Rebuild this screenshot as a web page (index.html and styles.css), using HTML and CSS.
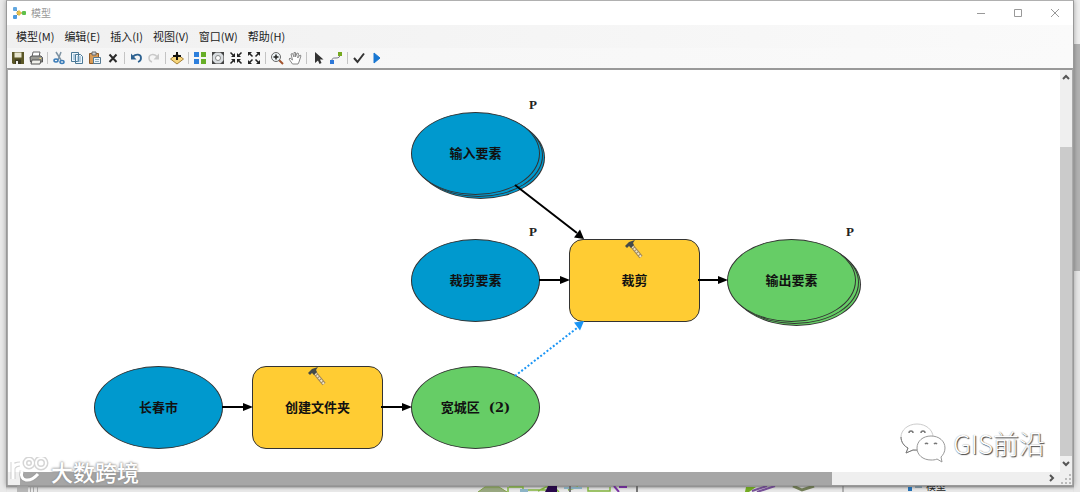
FILE: index.html
```html
<!DOCTYPE html>
<html lang="zh-CN">
<head>
<meta charset="utf-8">
<title>模型</title>
<link rel="stylesheet" href="styles.css">
</head>
<body>
<div class="desk">
<main class="window">
  <header class="titlebar">
    <svg class="app-icon" width="14" height="14" viewBox="0 0 14 14"><path d="M3 3l4 4h4M3 11l4-4" fill="none" stroke="#667" stroke-width="1"/><rect x="1" y="1" width="4" height="4" rx="1" fill="#63a8e0"/><rect x="1" y="9" width="4" height="4" rx="1" fill="#4c9be0"/><path d="M7 4l3 3-3 3-3-3z" fill="#e5c04a"/><rect x="10" y="5" width="4" height="4" rx="1" fill="#5fc04a"/></svg>
    <h1 class="title">模型</h1>
    <div class="controls">
      <button class="control" aria-label="最小化"><svg width="10" height="10"><path d="M1 5.500h8"/></svg></button>
      <button class="control" aria-label="最大化"><svg width="10" height="10"><path d="M1.500 1.500h7v7h-7z"/></svg></button>
      <button class="control" aria-label="关闭"><svg width="10" height="10"><path d="M1 1l8 8M9 1l-8 8"/></svg></button>
    </div>
  </header>
  <nav class="menu">
    <button>模型(M)</button><button>编辑(E)</button><button>插入(I)</button><button>视图(V)</button><button>窗口(W)</button><button>帮助(H)</button>
  </nav>
  <div class="toolbar" role="toolbar">
    <button class="tool" aria-label="保存"><svg width="14" height="14" viewBox="0 0 14 14"><path d="M1 1h12v12H2l-1-1z" fill="#5b5727"/><path d="M3.500 1.500h7v5h-7z" fill="#e8e6cf"/><path d="M4 8.500h6V13H4z" fill="#3c3a20"/><path d="M5 10h2v3H5z" fill="#eee"/></svg></button>
    <button class="tool" aria-label="打印"><svg width="14" height="14" viewBox="0 0 14 14"><path d="M4 1h7l-1 5H3z" fill="#fff" stroke="#666"/><path d="M1 6l2-1h9l1.500 1.500V11h-12z" fill="#9a9a94" stroke="#555"/><path d="M3 9h9l-1 4H2z" fill="#f1f1ec" stroke="#555"/><path d="M10.500 7.500h1.500" stroke="#fd6"/></svg></button>
    <span class="sep"></span>
    <button class="tool" aria-label="剪切"><svg width="14" height="14" viewBox="0 0 14 14"><path d="M4 1l5 8M9 1L6 9" stroke="#7e93a3" stroke-width="1.500"/><g fill="none" stroke="#3a7cb8" stroke-width="1.500"><ellipse cx="4" cy="9.500" rx="2" ry="1.500"/><ellipse cx="10" cy="11" rx="2" ry="1.500"/></g></svg></button>
    <button class="tool" aria-label="复制"><svg width="14" height="14" viewBox="0 0 14 14"><g fill="#eef6fc" stroke="#4a7896"><path d="M1.500 1.500h7v9h-7zM5.500 3.500h5l2 2v7h-7z"/></g><path d="M7 6h4M7 8h4M7 10h4M3 4h2M3 6h2M3 8h2" stroke="#79a6c7"/></svg></button>
    <button class="tool" aria-label="粘贴"><svg width="14" height="14" viewBox="0 0 14 14"><path d="M1.500 2.500h9v10h-9z" fill="#d99b55" stroke="#8d5a28"/><path d="M4 1h4v3H4z" fill="#d3d3d3" stroke="#666"/><path d="M5.500 6.500h7v6h-7z" fill="#edf5fa" stroke="#557890"/><path d="M7 8.500h4M7 10.500h4" stroke="#88a9bd"/></svg></button>
    <button class="tool" aria-label="删除"><svg width="14" height="14" viewBox="0 0 14 14"><path d="M3.500 3.500l7 7.500M10.500 3.500l-7 7.500" stroke="#2b2b2b" stroke-width="2"/></svg></button>
    <span class="sep"></span>
    <button class="tool" aria-label="撤销"><svg width="14" height="14" viewBox="0 0 14 14"><path d="M4 5.500C7 2.500 12 3 12 7c0 2-1.500 3.500-3 4" fill="none" stroke="#2c6190" stroke-width="1.800"/><path d="M2 2.500v6h5.500z" fill="#2c6190"/></svg></button>
    <button class="tool" aria-label="重做"><svg width="14" height="14" viewBox="0 0 14 14"><path d="M10 5.500C7 2.500 2 3 2 7c0 2 1.500 3.500 3 4" fill="none" stroke="#c9c9c9" stroke-width="1.500"/><path d="M12 2.500v6H6.500z" fill="#c9c9c9"/></svg></button>
    <span class="sep"></span>
    <button class="tool" aria-label="添加数据"><svg width="14" height="14" viewBox="0 0 14 14"><path d="M7 3l6.500 5L7 13 .5 8z" fill="#f6d57b" stroke="#a58135"/><path d="M7 1v8M3 5h8" stroke="#111" stroke-width="2"/></svg></button>
    <span class="sep"></span>
    <button class="tool" aria-label="自动布局"><svg width="14" height="14" viewBox="0 0 14 14"><path d="M1 1h5v5H1zM1 8h5v5H1z" fill="#2d7fdc"/><path d="M8 1h5v5H8zM8 8h5v5H8z" fill="#67ae28"/></svg></button>
    <button class="tool" aria-label="全图"><svg width="14" height="14" viewBox="0 0 14 14"><path d="M1.500 1.500h11v11h-11z" fill="#d9dde0" stroke="#888"/><circle cx="7" cy="7" r="2.500" fill="#fff" stroke="#888"/><path d="M1 1h4L1 5zM13 1v4L9 1zM1 13V9l4 4zM13 13H9l4-4z" fill="#444"/></svg></button>
    <button class="tool" aria-label="固定缩小"><svg width="14" height="14" viewBox="0 0 14 14"><path d="M1.500 1.500l3 3M12.500 1.500l-3 3M1.500 12.500l3-3M12.500 12.500l-3-3" stroke="#222" stroke-width="1.500"/><path d="M6 6H2l4-4zM8 6h4L8 2zM6 8H2l4 4zM8 8h4l-4 4z" fill="#222"/></svg></button>
    <button class="tool" aria-label="固定放大"><svg width="14" height="14" viewBox="0 0 14 14"><path d="M2 2l3.500 3.500M12 2L8.500 5.500M2 12l3.500-3.500M12 12L8.500 8.500" stroke="#222" stroke-width="1.500"/><path d="M1 1h4L1 5zM13 1v4L9 1zM1 13V9l4 4zM13 13H9l4-4z" fill="#222"/></svg></button>
    <span class="sep"></span>
    <button class="tool" aria-label="缩放"><svg width="14" height="14" viewBox="0 0 14 14"><path d="M9 9l4 4" stroke="#a2522c" stroke-width="2"/><circle cx="6" cy="6" r="4.500" fill="#eef4f6" stroke="#666"/><path d="M6 3.500v5M3.500 6h5" stroke="#222" stroke-width="1.500"/></svg></button>
    <button class="tool" aria-label="平移"><svg width="14" height="14" viewBox="0 0 14 14"><path d="M4.500 13L1 8l1-1 2.500 2L3 3l1.500-.5L6 6V1.500h1.500V6L9 2l1.500.5L9.700 7 12 4l1 .7L11 11l-1 2z" fill="#fff" stroke="#888"/></svg></button>
    <span class="sep"></span>
    <button class="tool" aria-label="选择"><svg width="14" height="14" viewBox="0 0 14 14"><path d="M4 1v11l3-2.500L8.500 13l2-1L9 8.500h3.500z" fill="#333"/></svg></button>
    <button class="tool" aria-label="连接"><svg width="14" height="14" viewBox="0 0 14 14"><path d="M3 10c0-3 1-3 4-3s4-1 4-4" fill="none" stroke="#778"/><path d="M1 9h4v4H1z" fill="#2e78d8"/><path d="M9 1h4v4H9z" fill="#75a91f"/></svg></button>
    <span class="sep"></span>
    <button class="tool" aria-label="验证"><svg width="14" height="14" viewBox="0 0 14 14"><path d="M2 7l3.500 4L12 2.500" fill="none" stroke="#333" stroke-width="2"/></svg></button>
    <button class="tool" aria-label="运行"><svg width="14" height="14" viewBox="0 0 14 14"><path d="M4 2l6 5-6 5z" fill="#1877d2" stroke="#1877d2"/></svg></button>
  </div>
  <section class="view">
    <div class="canvas">
      <svg class="links" width="900" height="400" aria-hidden="true">
        <g stroke="#000" stroke-width="2"><path d="M507 115l62 48M531 210h24M690 210h24M214 337h25M373 337h24"/></g>
        <path d="M507 306l62-48" stroke="#1a95f5" stroke-width="2" stroke-dasharray="2 2"/>
        <path d="M576 169l-10-1.500 6-8zM562 210l-10 4v-8zM720 210l-10 4v-8zM245 337l-10 4v-8zM404 337l-10 4v-8z"/>
        <path d="M576 251l-10 1.500 6 8z" fill="#1a95f5"/>
      </svg>
      <div class="node oval blue stack input">输入要素</div>
      <div class="node oval blue clip-input">裁剪要素</div>
      <div class="node box clip">裁剪
        <svg class="hammer" width="20" height="20" viewBox="0 0 20 20"><path d="M7 6l9 11" stroke="#a0875a" stroke-width="4"/><path d="M7 6l9 11" stroke="#eee5ca" stroke-width="2" stroke-dasharray="2 1"/><path d="M0 6l4-4 6-2-2 3 1 2-3 3-2-2-2 2z" fill="#444a49"/></svg>
      </div>
      <div class="node oval green stack output">输出要素</div>
      <div class="node oval blue city">长春市</div>
      <div class="node box folder">创建文件夹
        <svg class="hammer" width="20" height="20" viewBox="0 0 20 20"><path d="M7 6l9 11" stroke="#a0875a" stroke-width="4"/><path d="M7 6l9 11" stroke="#eee5ca" stroke-width="2" stroke-dasharray="2 1"/><path d="M0 6l4-4 6-2-2 3 1 2-3 3-2-2-2 2z" fill="#444a49"/></svg>
      </div>
      <div class="node oval green district">宽城区&nbsp; (2)</div>
      <span class="param p-input">P</span><span class="param p-clip">P</span><span class="param p-output">P</span>
      <div class="mark-right">
        <svg width="46" height="40" viewBox="0 0 46 40"><g fill="#fff" stroke="#ccc" stroke-width="1"><path d="M17 1C8 1 1 7 1 14c0 5 3 9 7 11l-2 5 7-3c3 1 7 1 10 0 6-2 10-7 10-13C33 7 26 1 17 1z"/><path d="M1 14c0 5 3 9 7 11l-2 5 7-3h5" fill="none" stroke="#777"/><path d="M31 13c-8 0-14 5-14 12s6 12 14 12c2 0 4 0 6-1l5 3-1-5c2-2 4-5 4-9 0-7-6-12-14-12z" stroke="#999"/></g><g fill="none" stroke="#777" stroke-width="1.500"><path d="M9 10a2 2 0 0 1 4 0M21 10a2 2 0 0 1 4 0M25 21a2 2 0 0 1 3 0M34 21a2 2 0 0 1 3 0"/></g></svg>
        <span>GIS前沿</span>
      </div>
    </div>
    <div class="vscroll">
      <svg width="12" height="14"><path d="M3 9l3-3 3 3"/></svg>
      <div class="vtrack"><div class="vthumb"></div></div>
      <svg width="12" height="16"><path d="M3 6l3 3 3-3"/></svg>
    </div>
    <div class="hscroll">
      <div class="htrack"><div class="hthumb"></div></div>
      <svg width="18" height="12"><path d="M8 3l3 3-3 3"/></svg>
    </div>
    <svg class="grip" width="12" height="12"><path d="M9 2h2v2H9zM9 6h2v2H9zM9 10h2v2H9zM5 6h2v2H5zM5 10h2v2H5zM1 10h2v2H1z" fill="#bbb"/></svg>
  </section>
  <div class="mark-left">
    <svg width="40" height="28" viewBox="0 0 40 28"><g fill="none" stroke-linecap="butt"><g stroke="#999" stroke-width="5" opacity=".4"><path d="M4 5v17M4 11q2-4 7-4M13 14c-3 11 8 12 16 3"/><circle cx="20" cy="6" r="4"/><circle cx="32" cy="6" r="5"/></g><g stroke="#fff" stroke-width="3"><path d="M4 5v17M4 11q2-4 7-4M13 14c-3 11 8 12 16 3"/><circle cx="20" cy="6" r="4" stroke-width="2"/><circle cx="32" cy="6" r="5" stroke-width="2"/></g></g></svg>
    <span>大数跨境</span>
  </div>
</main>
<footer class="behind">
  <svg class="edge" width="24" height="6" aria-hidden="true"><path d="M0 0h11v6H0z" fill="#b8b8b8"/><path d="M13.500 0v6M16.500 0v6M20.500 0v6" stroke="#aaa"/></svg>
  <svg class="map" width="160" height="6" aria-hidden="true"><path d="M0 6l7-5h14l8 5" fill="#9aa982" stroke="#83a447"/><path d="M30 1v5M31 1h14v5M44 4h24M60 5l8-4h8l5 5M90 4l10-3M110 1v4h22V1" fill="none" stroke="#85b840" stroke-width="1.500"/><path d="M42 3h8v3h-8zM86 1h18v2h-18z" fill="#8eb6c8"/><path d="M70 0h9v6H67z" fill="#2a0a4c"/><path d="M92 0v6M159 0v6" stroke="#777" stroke-width="2"/><path d="M136 0l5 6M141 1h8" stroke="#7b35a4" stroke-width="2"/></svg>
  <svg class="map map-two" width="100" height="6" aria-hidden="true"><path d="M1 1h10L4 6H0z" fill="#75ad24"/><path d="M7 5l15-5M12 6l18-6" stroke="#79529a" stroke-width="2"/><path d="M48 0l9 4 12-4" fill="none" stroke="#75805a" stroke-width="3"/><path d="M98 0v6" stroke="#777"/></svg>
  <svg class="tree-icon" width="16" height="6" aria-hidden="true"><path d="M1 1h4v4H1z" fill="#2472b8"/><path d="M8 0h7v2H8z" fill="#8296a2"/></svg>
  <span class="tree-label">模型</span>
</footer>
</div>
</body>
</html>
```

FILE: styles.css
```css
* { box-sizing: border-box; }
body {
  margin: 0;
  font-family: "Noto Sans CJK SC", sans-serif;
  color: #222;
}
button { border: 0; padding: 0; background: none; font: inherit; color: inherit; }
svg { display: block; flex: none; }
.desk {
  display: flex;
  flex-direction: column;
  height: 100vh;
  padding: 0 6px;
  overflow: hidden;
  background:
    linear-gradient(#eee 44px, #b2b2b2 44px 271px, #e8e8e8 271px) right / 8px 100% no-repeat,
    #e9e9e9;
}
.window {
  position: relative;
  flex: 1;
  min-height: 0;
  display: flex;
  flex-direction: column;
  border: 1px solid #999;
  border-top-color: #b0b0b0;
  background: #fff;
  box-shadow: 0 0 5px #0005;
}
.titlebar { display: flex; align-items: center; height: 24px; padding-left: 5px; }
.title { flex: 1; margin: 0 0 0 5px; font-size: 10px; line-height: 14px; font-weight: 400; color: #999; }
.controls { display: flex; }
.control { display: grid; place-items: center; width: 37px; height: 24px; }
.control path { fill: none; stroke: #999; }
.menu {
  display: flex;
  align-items: center;
  gap: 10px;
  height: 23px;
  padding: 0 9px 2px;
  font-size: 11px;
  line-height: 16px;
  background: linear-gradient(90deg, #f0f0f0, #fafafa);
}
.toolbar {
  display: flex;
  align-items: center;
  height: 20px;
  padding-left: 2px;
  background: linear-gradient(90deg, #f5f5f5, #fafafa);
}
.tool { display: grid; place-items: center; width: 18px; height: 18px; }
.sep { width: 1px; height: 12px; margin: 0 2px; background: #c4c4c4; }
.view {
  flex: 1;
  min-height: 0;
  display: grid;
  grid-template: minmax(0, 1fr) 13px / minmax(0, 1fr) 12px;
  border: 1px solid #aaa;
  border-top: 2px solid #999;
  border-bottom: 0;
  background: #efefef;
}
.canvas { position: relative; overflow: hidden; background: #fff; }
.links { position: absolute; z-index: 1; left: 0; top: 0; fill: #000; }
.node {
  position: absolute;
  display: grid;
  place-items: center;
  height: 83px;
  width: 129px;
  border: 1px solid #333;
  font: bold 13px/18px "DejaVu Serif", "Noto Sans CJK SC", serif;
  color: #111;
}
.oval { border-radius: 50%; }
.box { width: 131px; border-radius: 14px; background: #fc3; }
.blue { --fill: #0099ce; background: var(--fill); }
.green { --fill: #66cd66; background: var(--fill); }
.stack {
  box-shadow: 3px 2px 0 -1px var(--fill), 3px 2px 0 #333, 5px 4px 0 -1px var(--fill), 5px 4px 0 #333;
}
.input { left: 403px; top: 42px; }
.clip-input { left: 403px; top: 169px; }
.clip { left: 561px; top: 169px; }
.output { left: 719px; top: 169px; }
.city { left: 86px; top: 296px; }
.folder { left: 244px; top: 296px; }
.district { left: 403px; top: 296px; }
.hammer { position: absolute; left: 55px; top: 0; }
.param { position: absolute; font: bold 13px/14px "Liberation Serif", serif; }
.p-input { left: 521px; top: 28px; }
.p-clip { left: 521px; top: 155px; }
.p-output { left: 838px; top: 155px; }
.mark-right {
  position: absolute;
  right: 15px;
  bottom: 9px;
  display: flex;
  align-items: center;
  gap: 7px;
  font-size: 26px;
  line-height: 36px;
  font-weight: 300;
  color: #fff;
  text-shadow: 1px 1px 1px #444, 0 0 1px #888;
}
.vscroll { display: flex; flex-direction: column; }
.vscroll path, .hscroll path { fill: none; stroke: #555; stroke-width: 2; }
.vtrack { flex: 1; display: flex; flex-direction: column; justify-content: flex-end; }
.vthumb { height: 83%; background: #cbcbcb; }
.hscroll { display: flex; }
.htrack { flex: 1; display: flex; padding-left: 12px; }
.hthumb { width: 79.5%; background: #a6a6a6; }
.mark-left {
  position: absolute;
  left: 2px;
  bottom: 0;
  display: flex;
  align-items: center;
  gap: 2px;
  font-size: 22px;
  line-height: 28px;
  font-weight: 500;
  color: #fff;
  text-shadow: 0 0 2px #888, 0 0 3px #999;
}
.behind {
  display: flex;
  height: 6px;
  overflow: hidden;
  padding-left: 11px;
  box-shadow: inset 0 3px 3px -2px #888;
}
.map { margin-left: 437px; }
.map-two { margin-left: 107px; }
.tree-icon { margin-left: 62px; }
.tree-label { margin-left: 3px; margin-top: -7px; font-size: 10px; line-height: 14px; }
```
